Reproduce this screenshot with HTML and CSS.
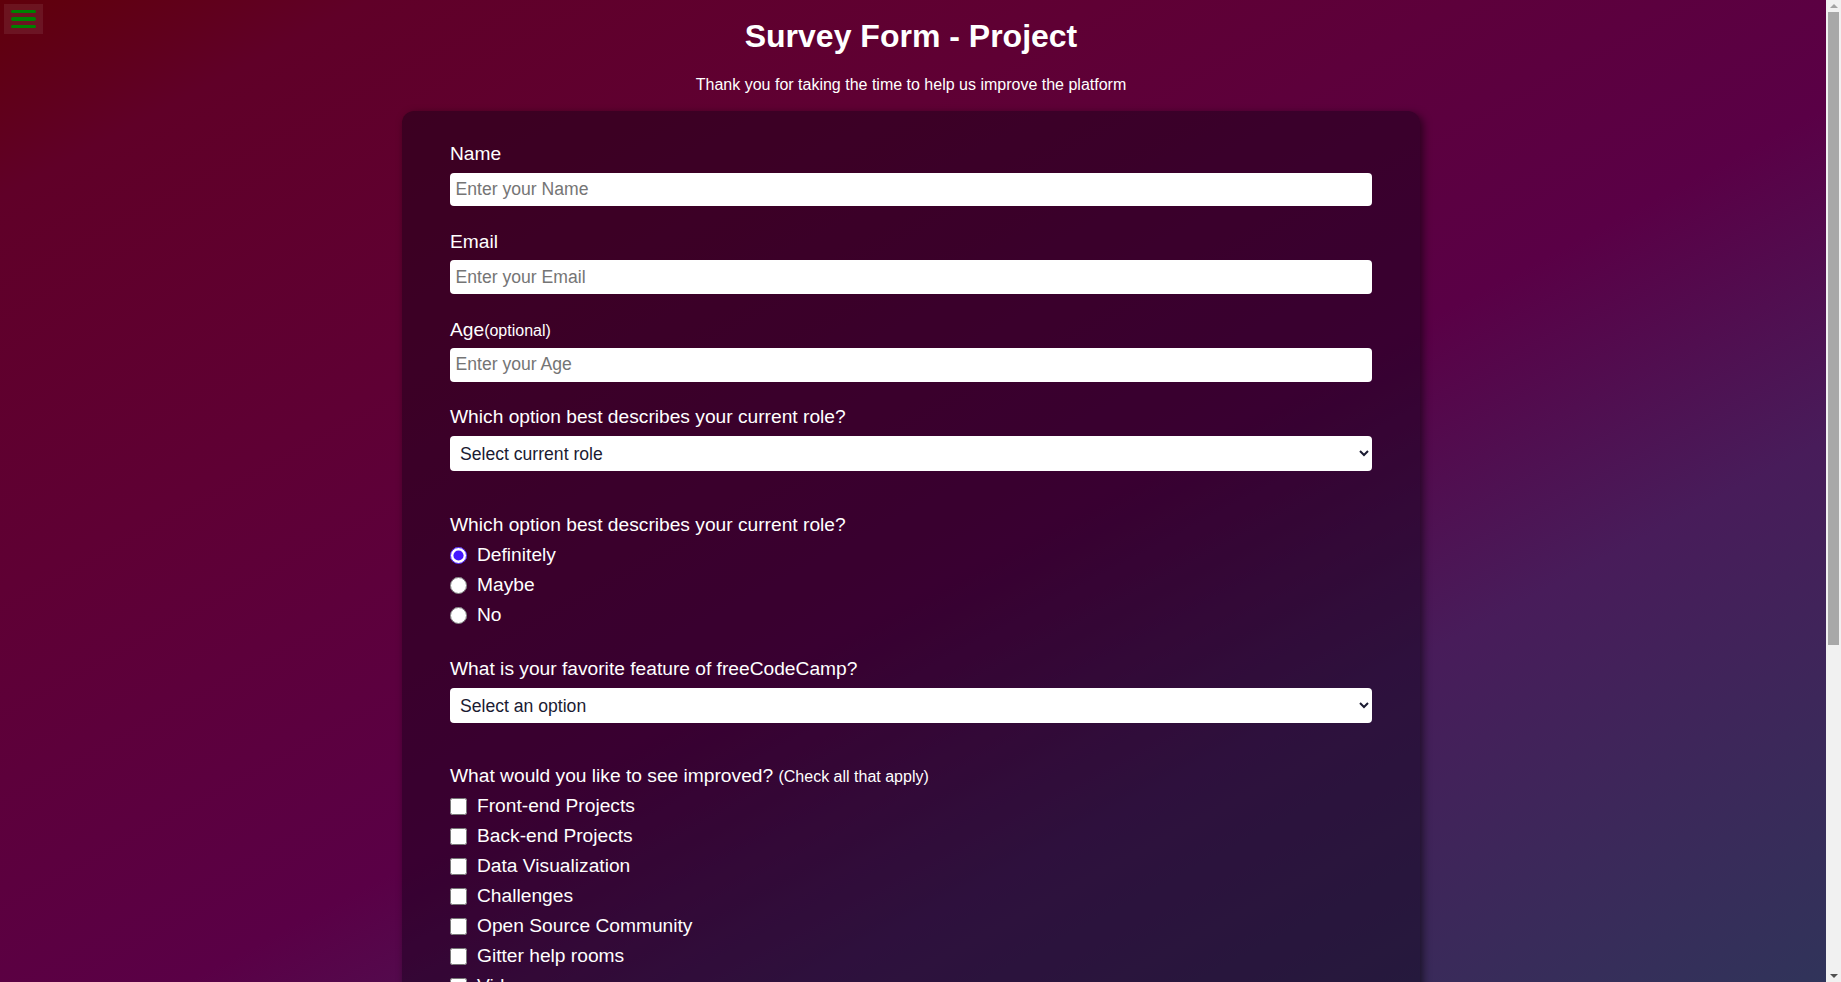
FILE: index.html
```html
<!DOCTYPE html>
<html lang="en">
<head>
<meta charset="utf-8">
<title>Survey Form - Project</title>
<link rel="stylesheet" href="styles.css">
</head>
<body>
<button class="menu-toggle" type="button" aria-label="Menu">
  <span class="menu-bar"></span>
  <span class="menu-bar"></span>
  <span class="menu-bar"></span>
</button>
<div class="scrollbar" aria-hidden="true">
  <span class="scroll-button"><span class="scroll-arrow scroll-arrow-up"></span></span>
  <span class="scroll-thumb"></span>
  <span class="scroll-track"></span>
  <span class="scroll-button"><span class="scroll-arrow scroll-arrow-down"></span></span>
</div>
<main class="page">
  <header class="header">
    <h1 id="title" class="title">Survey Form - Project</h1>
    <p id="description" class="description">Thank you for taking the time to help us improve the platform</p>
  </header>
  <form id="survey-form" class="card">
    <div class="field">
      <label id="name-label" class="label" for="name">Name</label>
      <input id="name" class="control" type="text" placeholder="Enter your Name">
    </div>
    <div class="field">
      <label id="email-label" class="label" for="email">Email</label>
      <input id="email" class="control" type="email" placeholder="Enter your Email">
    </div>
    <div class="field">
      <label id="number-label" class="label" for="number">Age<span class="hint">(optional)</span></label>
      <input id="number" class="control" type="number" min="10" max="99" placeholder="Enter your Age">
    </div>
    <div class="field field-select">
      <label class="label" for="dropdown">Which option best describes your current role?</label>
      <select id="dropdown" class="control select">
        <option value="">Select current role</option>
        <option value="student">Student</option>
        <option value="job">Full Time Job</option>
        <option value="learner">Full Time Learner</option>
        <option value="preferNo">Prefer not to say</option>
        <option value="other">Other</option>
      </select>
    </div>
    <div class="field field-choices">
      <p class="label">Which option best describes your current role?</p>
      <label class="choice"><input class="radio" type="radio" name="user-recommend" value="definitely" checked><span>Definitely</span></label>
      <label class="choice"><input class="radio" type="radio" name="user-recommend" value="maybe"><span>Maybe</span></label>
      <label class="choice"><input class="radio" type="radio" name="user-recommend" value="not-sure"><span>No</span></label>
    </div>
    <div class="field field-select field-select-tight">
      <label class="label" for="most-like">What is your favorite feature of freeCodeCamp?</label>
      <select id="most-like" class="control select">
        <option value="">Select an option</option>
        <option value="challenges">Challenges</option>
        <option value="projects">Projects</option>
        <option value="community">Community</option>
        <option value="openSource">Open Source</option>
      </select>
    </div>
    <div class="field field-choices">
      <p class="label">What would you like to see improved? <span class="hint">(Check all that apply)</span></p>
      <label class="choice"><input class="check" type="checkbox" value="front-end-projects"><span>Front-end Projects</span></label>
      <label class="choice"><input class="check" type="checkbox" value="back-end-projects"><span>Back-end Projects</span></label>
      <label class="choice"><input class="check" type="checkbox" value="data-visualization"><span>Data Visualization</span></label>
      <label class="choice"><input class="check" type="checkbox" value="challenges"><span>Challenges</span></label>
      <label class="choice"><input class="check" type="checkbox" value="open-source-community"><span>Open Source Community</span></label>
      <label class="choice"><input class="check" type="checkbox" value="gitter-help-rooms"><span>Gitter help rooms</span></label>
      <label class="choice"><input class="check" type="checkbox" value="videos"><span>Videos</span></label>
      <label class="choice"><input class="check" type="checkbox" value="city-meetups"><span>City Meetups</span></label>
      <label class="choice"><input class="check" type="checkbox" value="wiki"><span>Wiki</span></label>
      <label class="choice"><input class="check" type="checkbox" value="forum"><span>Forum</span></label>
      <label class="choice"><input class="check" type="checkbox" value="additional-courses"><span>Additional Courses</span></label>
    </div>
    <div class="field">
      <label class="label" for="comments">Any comments or suggestions?</label>
      <textarea id="comments" class="control textarea" placeholder="Enter your comment here..."></textarea>
    </div>
    <button id="submit" class="submit" type="submit">Submit</button>
  </form>
</main>
</body>
</html>
```
FILE: styles.css
```css
* {
  box-sizing: border-box;
}

html {
  min-height: 100%;
  background: linear-gradient(to bottom right,
    #60000a 0%,
    #600028 10%,
    #5f0034 30%,
    #5a0046 55%,
    #481c5a 72%,
    #30345a 100%) fixed;
}

body {
  margin: 0;
  padding-right: 19px;
  font-family: "Liberation Sans", Arial, sans-serif;
  color: #ffffff;
}

/* menu button (fixed overlay) */
.menu-toggle {
  position: fixed;
  top: 4px;
  left: 4px;
  z-index: 10;
  width: 39px;
  height: 30px;
  padding: 6px 7px;
  border: none;
  background: rgba(255, 255, 255, 0.08);
  display: flex;
  flex-direction: column;
  gap: 4px;
  cursor: pointer;
}

.menu-bar {
  display: block;
  width: 25px;
  height: 4px;
  border-radius: 2px;
  background: #008000;
}

/* classic window scrollbar drawn over the right edge */
.scrollbar {
  position: fixed;
  top: 0;
  right: 0;
  z-index: 20;
  width: 15px;
  height: 100vh;
  background: #f1f1f1;
  display: flex;
  flex-direction: column;
  align-items: center;
}

.scroll-button {
  flex: none;
  width: 15px;
  height: 12px;
  display: flex;
  align-items: center;
  justify-content: center;
}

.scroll-arrow {
  width: 0;
  height: 0;
  border-left: 4px solid transparent;
  border-right: 4px solid transparent;
}

.scroll-arrow-up {
  border-bottom: 4px solid #a3a3a3;
}

.scroll-arrow-down {
  border-top: 4px solid #505050;
}

.scroll-thumb {
  flex: none;
  width: 11px;
  height: 633px;
  background: #a8a8a8;
}

.scroll-track {
  flex: 1;
}

.page {
  padding-bottom: 40px;
}

.header {
  padding-top: 17.5px;
  text-align: center;
}

.title {
  margin: 0;
  font-size: 32px;
  font-weight: bold;
  line-height: normal;
}

.description {
  margin: 21.7px 0 0;
  font-size: 16px;
  line-height: normal;
}

.card {
  width: 1018px;
  margin: 16.6px auto 0;
  padding: 32.6px 48px 40px;
  border-radius: 12px;
  background: rgba(8, 0, 18, 0.4);
  box-shadow: 3px 3px 9px rgba(0, 0, 0, 0.55);
}

.field {
  display: flex;
  flex-direction: column;
  gap: 7.5px;
  margin-bottom: 24.6px;
}

.field-select {
  gap: 8px;
  margin-bottom: 43.3px;
}

.field-select-tight {
  margin-bottom: 42px;
}

.field-choices {
  gap: 8px;
  margin-bottom: 32px;
}

.label {
  margin: 0;
  font-size: 19.2px;
  line-height: normal;
}

.hint {
  font-size: 16px;
}

.control {
  display: block;
  width: 100%;
  height: 33.5px;
  margin: 0;
  padding: 0 5.5px;
  border: none;
  border-radius: 4px;
  background: #ffffff;
  color: #1b1b32;
  font-family: "Liberation Sans", Arial, sans-serif;
  font-size: 17.6px;
}

.select {
  height: 35px;
  padding: 0 6px;
}

.textarea {
  height: 120px;
  padding: 6px;
  resize: vertical;
}

.choice {
  display: flex;
  align-items: center;
  gap: 10.5px;
  font-size: 19.2px;
  line-height: normal;
}

.radio,
.check {
  width: 16.5px;
  height: 16.5px;
  margin: 0;
  flex: none;
  accent-color: #4318ff;
}

.submit {
  display: block;
  width: 100%;
  height: 44px;
  border: none;
  border-radius: 4px;
  background: #37af65;
  color: #ffffff;
  font-family: "Liberation Sans", Arial, sans-serif;
  font-size: 19.2px;
}
```
